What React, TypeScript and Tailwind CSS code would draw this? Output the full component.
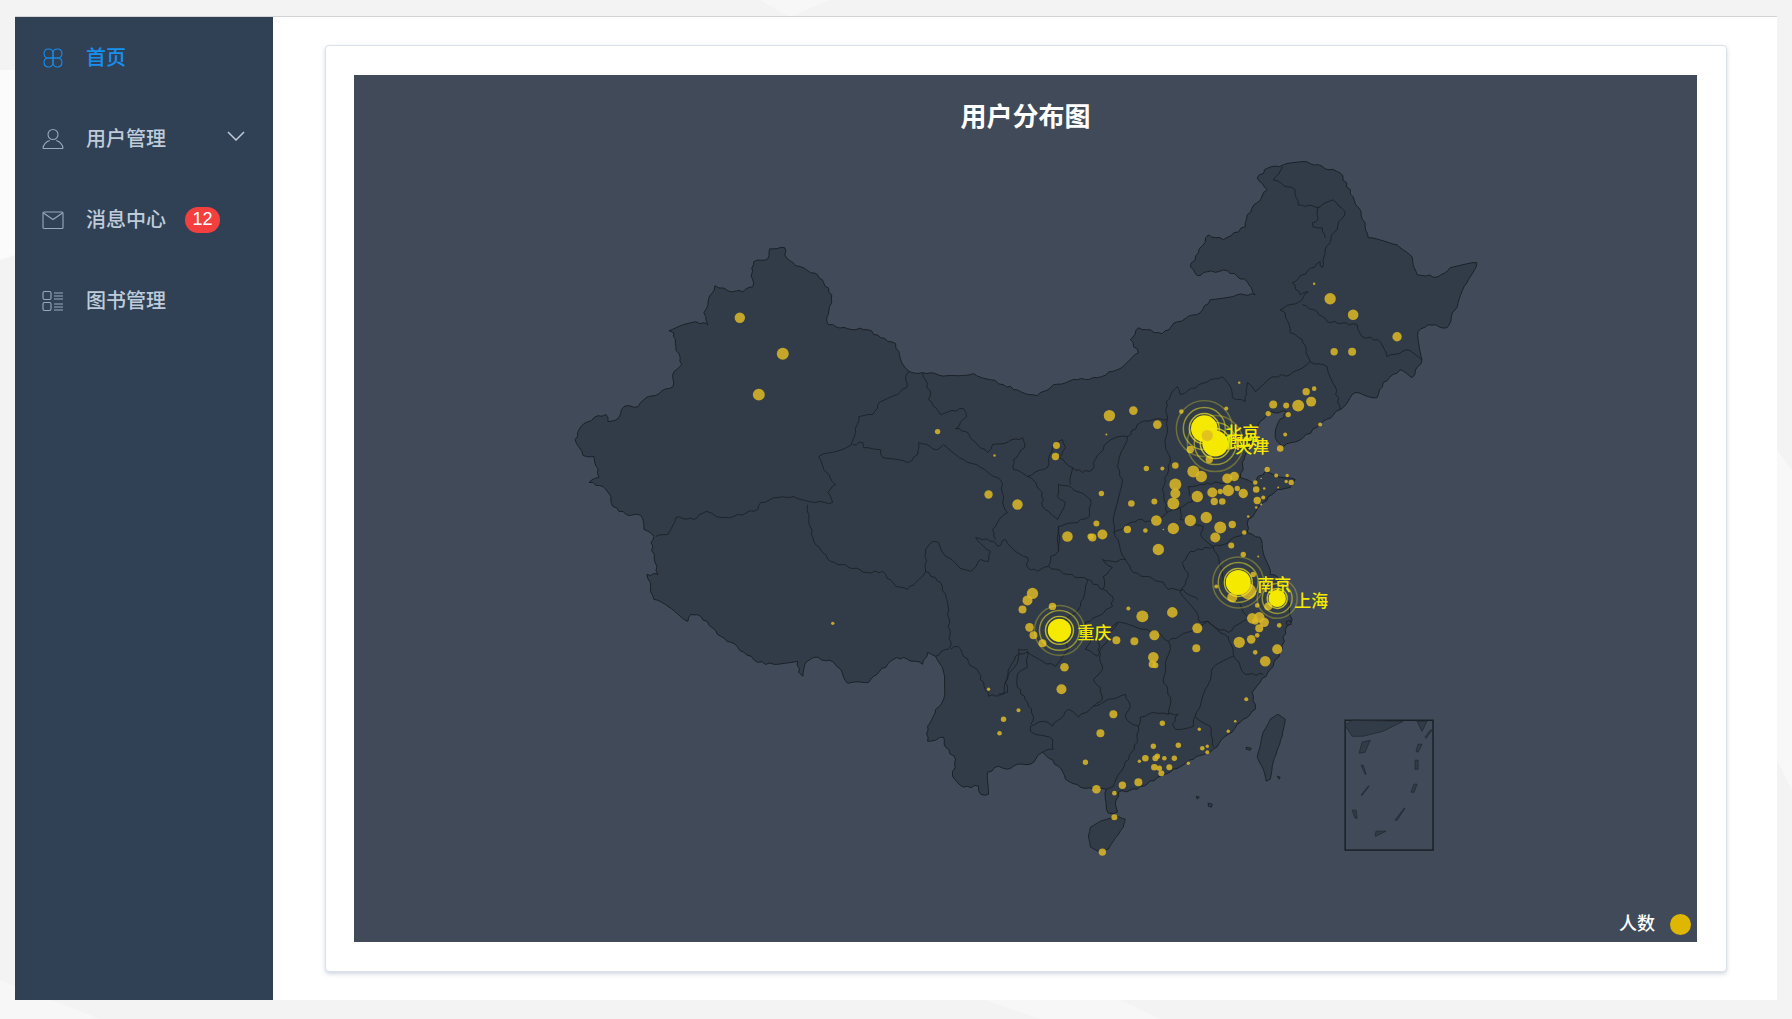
const OUTLINE =
  '784,248 784,255 795,266 807,271 817,275 823,283 831,295 831,303 826,318 828,325 847,329 867,330 880,338 895,344 900,360 909,372 922,373 947,376 973,374 990,380 1003,385 1020,392 1037,396 1053,385 1077,380 1097,378 1117,370 1138,353 1130,340 1138,328 1162,334 1177,322 1200,313 1210,300 1237,295 1255,295 1247,282 1227,271 1207,272 1197,276 1190,267 1198,253 1208,235 1223,240 1245,227 1247,215 1267,190 1257,178 1268,168 1283,165 1307,162 1340,173 1353,197 1365,223 1368,238 1397,245 1412,257 1417,275 1438,277 1450,268 1477,263 1467,283 1458,303 1447,328 1428,325 1418,332 1422,360 1412,378 1400,370 1383,383 1377,398 1355,393 1340,410 1320,425 1303,438 1283,447 1275,438 1278,423 1287,412 1267,413 1257,428 1242,463 1243,470 1240,478 1252,483 1265,472 1273,475 1295,480 1290,488 1277,490 1263,503 1255,513 1248,520 1247,533 1260,538 1270,575 1278,578 1287,600 1292,620 1285,630 1282,650 1270,670 1260,683 1252,693 1255,710 1240,723 1228,735 1213,750 1193,760 1173,770 1160,777 1137,790 1118,793 1115,805 1117,813 1108,814 1105,800 1106,790 1093,790 1080,788 1065,780 1058,767 1042,753 1030,765 1017,765 1007,770 998,767 987,773 988,795 980,795 978,787 963,788 952,777 955,760 945,748 943,738 927,742 927,727 935,710 943,700 943,673 935,657 927,653 922,665 903,658 893,660 873,677 868,683 847,684 840,670 833,663 813,658 805,663 802,677 798,673 797,662 773,665 757,663 743,653 730,643 720,637 700,617 690,615 687,622 667,607 653,600 646,575 657,575 650,543 653,537 643,530 640,516 625,515 612,507 610,497 602,487 588,483 598,478 593,457 582,456 574,440 580,427 593,418 605,415 607,422 618,418 623,407 637,407 643,400 672,387 673,372 681,365 675,347 673,333 668,331 695,322 707,325 703,313 714,286 727,291 742,292 752,287 751,268 753,262 767,259 769,249 784,248'

const BORDERS = [
  // xinjiang
  '909,372 905,377 906,388 893,396 880,402 872,415 858,417 855,433 850,446 818,457 823,470 835,485 827,493 832,503 815,503 793,497 777,498 760,503 757,510 733,517 720,518 705,512 693,520 675,518 667,535 655,537',
  // tibet, qinghai
  '807,505 808,520 813,542 830,562 867,573 882,572 895,587 907,590 915,583 925,572 940,583 947,603 950,647 935,657',
  '925,572 925,550 932,542 938,543 945,557 963,570 970,572 980,560 988,562 990,552 975,538 993,542 997,547 1005,540 1013,550 1027,558 1027,568 1037,572 1048,567 1050,557 1058,552 1058,527 1077,523 1089,517 1090,500 1070,487 1058,485 1057,497 1065,503 1057,520 1042,507 1042,493 1030,478 1013,470 1013,460 1024,448 1022,438 1008,442 992,445 987,453 975,443 965,432 955,429 966,417 963,409 948,412 940,415 938,412 928,400 930,395 922,373',
  '852,445 862,443 863,448 880,450 882,458 907,463 917,455 918,443 937,450 943,445 963,460 980,468 997,478 1002,485 1002,503 1007,513 997,523 992,530 995,540',
  // ningxia, shaanxi, inner mongolia south
  '1027,477 1047,468 1052,447 1062,440 1065,448 1058,458 1072,468 1070,485',
  '1072,468 1082,473 1092,470 1095,460 1107,443 1113,439 1127,437 1140,423 1153,420 1167,420 1166,402 1177,387 1180,395 1210,380 1222,377 1230,387 1232,398 1245,402 1247,383 1255,392 1273,377 1290,375 1310,362 1308,357 1302,340 1290,333 1285,313 1280,310 1302,300 1308,292 1300,295 1292,283 1320,262 1322,268 1325,250 1345,212 1333,200 1320,207 1298,205 1295,190 1273,180 1282,167',
  '1318,207 1318,220 1312,223 1313,227 1322,228 1325,238',
  '1302,305 1317,312 1327,322 1357,325 1362,337 1378,340 1387,357 1407,350 1422,360',
  '1310,362 1327,367 1335,387 1340,410',
  '1127,437 1117,467 1122,480 1113,523 1115,537 1125,560 1133,573 1163,583 1168,590 1183,590 1188,595 1198,600',
  '1113,533 1138,520 1152,523 1167,513 1180,508 1192,502 1188,487 1200,485 1218,483 1230,483 1240,478',
  '1167,420 1165,445 1170,463 1162,490 1167,513',
  // henan, shandong, anhui, jiangsu
  '1180,520 1203,527 1200,535 1213,547 1223,545 1237,537 1247,533',
  '1180,508 1180,520',
  '1213,547 1190,552 1182,563 1188,577 1180,593 1198,617 1200,623 1208,622 1215,628 1228,633 1238,625 1248,620 1262,616',
  '1213,547 1222,570 1225,590 1240,605 1248,620',
  '1228,637 1233,655 1240,667 1245,675 1263,675',
  '1233,657 1213,668 1207,687 1200,707 1195,717 1210,727 1213,748',
  '1195,717 1193,727 1175,730 1172,725 1178,715 1167,715 1153,713 1140,718 1138,727 1132,725 1125,718 1130,707 1125,695',
  '1168,715 1170,698 1163,680 1165,663 1170,650 1168,642 1157,633 1143,630 1117,623 1098,643 1100,663 1102,670 1093,680 1100,688 1102,700 1093,707 1078,718 1068,710 1052,727 1043,722 1030,727 1030,732 1052,740 1053,750 1042,753',
  '1168,642 1187,633 1207,622 1217,630 1228,638',
  '1093,707 1108,700 1125,695',
  '1138,727 1137,743 1120,773 1113,787 1106,790',
  // guizhou, chongqing, sichuan
  '1030,725 1033,717 1027,703 1017,688 1017,675 1027,668 1027,652 1015,657 1010,667 1005,683 1007,693 998,697',
  '950,650 957,647 968,663 978,673 988,697 1003,695 1007,677 1017,663 1018,650 1027,650',
  '1027,652 1042,662 1055,667 1068,650 1062,625 1080,607 1085,590 1087,580',
  '1048,567 1067,575 1087,580 1103,590 1112,597 1112,607 1097,617 1085,623 1090,643 1085,650 1097,657 1117,623',
  '1102,560 1112,568 1103,577 1103,590',
  '1102,560 1112,562 1125,560',
  '1058,527 1058,552',
]

const ISLANDS = [
  '1088,837 1090,828 1100,822 1115,817 1125,820 1123,828 1113,842 1108,850 1097,852 1090,848 1088,837',
  '1270,720 1278,715 1285,720 1282,737 1273,763 1270,780 1266,782 1263,770 1257,758 1263,733 1270,720',
  '1246,748 1251,749 1250,751 1246,750 1246,748',
  '1277,777 1280,778 1279,780 1277,777',
  '1196,797 1199,798 1197,800 1196,797',
  '1208,804 1212,805 1211,808 1208,807 1208,804',
  '1286,622 1290,621 1291,625 1287,626 1286,622',
]

const INSET_SHAPES = [
  '1345,726 1352,721 1403,722 1383,732 1363,737 1352,737',
  '1417,722 1427,722 1422,732',
  '1362,743 1370,741 1365,753 1359,754',
  '1430,731 1432,731 1426,739 1425,738',
  '1418,745 1422,745 1418,753 1416,752',
  '1415,761 1418,761 1418,770 1415,770',
  '1361,766 1363,766 1366,775 1365,775',
  '1414,785 1417,785 1414,793 1411,793',
  '1368,787 1369,787 1362,796 1361,796',
  '1352,811 1356,811 1357,819 1355,819',
  '1404,809 1405,809 1397,821 1395,821',
  '1376,832 1386,832 1376,837 1375,837',
]

// x, y, r
const DOTS: [number, number, number][] = [
  [739, 318, 5.2], [782, 354, 6], [758, 395, 6], [937, 432, 2.7], [994, 456, 1.2], [1056, 446, 3.5], [1055, 457, 3.7], [988, 495, 4.2], [1017, 505, 5.2],
  [1314, 284, 1.2], [1330, 299, 5.7], [1353, 315, 5.3], [1397, 337, 4.7], [1334, 352, 3.7], [1352, 352, 4], [1239, 383, 1.2], [1306, 392, 3.7], [1314, 389, 2.3],
  [1273, 405, 4], [1286, 406, 3], [1298, 406, 6], [1311, 402, 5], [1268, 414, 2.7], [1288, 415, 2.7], [1320, 425, 2], [1285, 435, 2], [1280, 449, 3.3],
  [1226, 409, 2], [1181, 412, 2.3], [1109, 416, 5.7], [1133, 411, 4.3], [1157, 425, 4.3], [1106, 435, 1], [1190, 450, 3.7], [1209, 460, 3.7], [1175, 466, 3.3],
  [1146, 469, 2.7], [1162, 469, 2], [1193, 472, 6], [1201, 477, 5.7], [1227, 479, 5], [1234, 477, 4.7], [1267, 470, 2.7], [1276, 476, 2], [1287, 476, 1.7],
  [1286, 482, 1.7], [1291, 483, 2.7], [1255, 483, 2.3], [1261, 479, 0.8], [1256, 490, 3.3], [1264, 489, 1.3], [1278, 488, 1], [1175, 485, 6], [1175, 494, 5],
  [1212, 493, 5], [1220, 492, 2.7], [1228, 491, 5.7], [1237, 489, 2.7], [1243, 494, 4.7], [1197, 497, 5.7], [1101, 494, 2.7], [1131, 504, 3.3], [1154, 502, 3],
  [1173, 504, 6], [1214, 502, 3.7], [1222, 502, 3.3], [1257, 501, 3.7], [1263, 498, 2], [1261, 505, 1], [1256, 508, 1.3], [1248, 517, 1.3], [1096, 524, 3],
  [1156, 521, 5.3], [1190, 521, 5.7], [1206, 518, 5.7], [1232, 525, 3.7], [1127, 530, 3.7], [1145, 531, 2.3], [1163, 530, 0.8], [1173, 529, 5.7], [1220, 528, 6],
  [1244, 533, 2.3], [1067, 537, 5.3], [1092, 538, 4], [1102, 535, 5], [1090, 537, 3], [1215, 538, 5], [1158, 550, 5.7], [1231, 546, 3], [1243, 555, 2.7], [1258, 557, 1],
  [1216, 587, 2], [1232, 598, 5], [1248, 592, 8], [1253, 575, 2.7], [1257, 606, 2.3], [1268, 607, 4], [1252, 619, 5.3], [1259, 618, 5.3], [1264, 623, 4.7],
  [1255, 622, 3.3], [1259, 629, 4], [1279, 626, 2.3], [1257, 636, 2.3], [1251, 640, 4.3], [1239, 643, 5.7], [1277, 650, 5], [1255, 653, 2.3], [1265, 662, 5.3],
  [1246, 700, 2], [1235, 722, 1.3], [1228, 732, 1.7], [1128, 609, 2], [1142, 617, 6], [1172, 613, 5.3], [1197, 629, 5], [1116, 641, 4], [1134, 642, 4], [1154, 636, 5],
  [1196, 649, 4], [1153, 658, 5.3], [1152, 665, 3.7], [1155, 666, 3], [1113, 715, 4], [1162, 724, 2.7], [1199, 730, 1.7], [1100, 734, 4], [1153, 747, 2.7],
  [1178, 746, 2.7], [1202, 749, 2.3], [1207, 747, 1.7], [1207, 753, 2], [1145, 759, 3.3], [1139, 762, 1.7], [1157, 757, 2.7], [1155, 759, 3], [1164, 759, 2.3],
  [1174, 759, 2.7], [1154, 768, 3.3], [1159, 769, 2.7], [1161, 774, 3], [1169, 768, 3], [1188, 764, 1.7], [1138, 783, 4], [1122, 786, 3.7], [1114, 794, 2.3],
  [1114, 818, 3], [1102, 853, 3.7], [1032, 594, 5.7], [1027, 601, 5], [1022, 610, 4], [1052, 607, 3.7], [1029, 628, 4.3], [1033, 636, 4], [1042, 644, 4],
  [1064, 668, 4.3], [1061, 690, 5], [1085, 763, 2.7], [1096, 790, 4.3], [832, 624, 1.7], [988, 690, 1.7], [1018, 711, 2], [1003, 720, 2.7], [999, 734, 2.3],
]

const CITIES = [
  { x: 1204, y: 429, r: 13.3, rings: [15, 21, 28] },
  { x: 1215, y: 444, r: 13, rings: [15, 21, 28] },
  { x: 1238, y: 583, r: 12.5, rings: [14, 20, 25.5] },
  { x: 1277, y: 599, r: 8.7, rings: [10, 15, 20] },
  { x: 1059, y: 631, r: 11.7, rings: [14, 20, 25] },
]

const LABELS = [
  { text: '北京', x: 1225, y: 439 },
  { text: '廊坊', x: 1226, y: 448 },
  { text: '天津', x: 1235, y: 453 },
  { text: '南京', x: 1257, y: 592 },
  { text: '上海', x: 1294, y: 608 },
  { text: '重庆', x: 1077, y: 640 },
]

// roughens a traced line so it reads like a real border
function rough(points: string, closed = false, amp = 1.1) {
  const pts = points.split(' ').map((p) => p.split(',').map(Number))
  let d = `M${pts[0][0]} ${pts[0][1]}`
  for (let i = 1; i < pts.length; i++) {
    const [x0, y0] = pts[i - 1]
    const [x1, y1] = pts[i]
    const len = Math.hypot(x1 - x0, y1 - y0)
    const steps = Math.max(1, Math.round(len / 4))
    for (let s = 1; s <= steps; s++) {
      const t = s / steps
      const x = x0 + (x1 - x0) * t
      const y = y0 + (y1 - y0) * t
      const n = s === steps ? 0 : Math.sin(x * 12.9 + y * 78.2) * amp
      d += `L${(x - ((y1 - y0) / len) * n).toFixed(1)} ${(y + ((x1 - x0) / len) * n).toFixed(1)}`
    }
  }
  return closed ? d + 'Z' : d
}

function ChinaMap() {
  return (
    <svg viewBox="354 75 1342 868" className="absolute inset-0 h-full w-full">
      <path d={rough(OUTLINE, true)} fill="#323c48" stroke="#1b2027" strokeWidth="1" />
      {BORDERS.map((b, i) => (
        <path key={i} d={rough(b)} fill="none" stroke="#1b2027" strokeWidth="0.9" />
      ))}
      {ISLANDS.map((b, i) => (
        <path key={i} d={rough(b, true, 0.3)} fill="#323c48" stroke="#1b2027" strokeWidth="0.9" />
      ))}

      {/* south china sea inset */}
      <rect x="1345" y="721" width="88" height="130" fill="none" stroke="#1b2027" strokeWidth="1.5" />
      {INSET_SHAPES.map((p, i) => (
        <polygon key={i} points={p} fill="#323c48" stroke="#222831" strokeWidth="0.8" />
      ))}

      {DOTS.map(([x, y, r], i) => (
        <circle key={i} cx={x} cy={y} r={r} fill="#ddb926" fillOpacity="0.85" />
      ))}

      {CITIES.map((c) => (
        <g key={c.x}>
          {c.rings.map((r, i) => (
            <circle key={r} cx={c.x} cy={c.y} r={r} fill="none" stroke="#f4e925" strokeWidth="1.5" strokeOpacity={0.7 - i * 0.2} />
          ))}
          <circle cx={c.x} cy={c.y} r={c.r} fill="#f5e900" />
        </g>
      ))}
      <circle cx="1207" cy="436" r="5.7" fill="#ddb926" fillOpacity="0.8" />

      {LABELS.map((l) => (
        <text key={l.text} x={l.x} y={l.y} fontSize="17" fontWeight="500" fill="#f5e900">
          {l.text}
        </text>
      ))}
    </svg>
  )
}

function FlowerIcon() {
  return (
    <svg viewBox="0 0 22 22" className="h-[22px] w-[22px]" fill="none" stroke="currentColor" strokeWidth="1.1">
      <path d="M11 11H6a4.5 4.5 0 1 1 5-5z" />
      <path d="M11 11h5a4.5 4.5 0 1 0-5-5z" />
      <path d="M11 11H6a4.5 4.5 0 1 0 5 5z" />
      <path d="M11 11h5a4.5 4.5 0 1 1-5 5z" />
    </svg>
  )
}

function UserIcon() {
  return (
    <svg viewBox="0 0 22 22" className="h-[22px] w-[22px]" fill="none" stroke="currentColor" strokeWidth="1.1">
      <circle cx="11" cy="6.5" r="5" />
      <path d="M1 20.5c0-4 3.5-7.2 6.8-8M21 20.5c0-4-3.500-7.200-6.800-8M1 20.500h20" />
    </svg>
  )
}

function MailIcon() {
  return (
    <svg viewBox="0 0 22 20" className="h-[20px] w-[22px]" fill="none" stroke="currentColor" strokeWidth="1.1">
      <rect x="1" y="2" width="20" height="16.500" rx="1" />
      <path d="M1.500 3 11 9.500 20.500 3" />
    </svg>
  )
}

function BookIcon() {
  return (
    <svg viewBox="0 0 22 22" className="h-[22px] w-[22px]" fill="none" stroke="currentColor" strokeWidth="1.1">
      <rect x="1" y="1.500" width="8" height="8" rx="1.500" />
      <rect x="1" y="12.500" width="8" height="8" rx="1.500" />
      <path d="M12 3h9M12 6h9M12 9h9M12 14h9M12 17h9M12 20h9" />
    </svg>
  )
}

function Background() {
  return (
    <svg viewBox="0 0 1792 1019" className="absolute inset-0 h-full w-full">
      <polygon points="0,70 60,70 60,240 0,260" fill="#fbfbfb" />
      <polygon points="760,0 830,0 790,17" fill="#f7f7f8" />
      <polygon points="0,980 100,1019 0,1019" fill="#f7f7f8" />
      <polygon points="985,1000 1120,1000 1160,1019 1040,1019" fill="#f7f7f8" />
      <polygon points="1777,450 1792,470 1792,790 1777,760" fill="#f8f8f9" />
    </svg>
  )
}

function App() {
  const items = [
    { label: '首页', icon: <FlowerIcon />, active: true },
    { label: '用户管理', icon: <UserIcon />, arrow: true },
    { label: '消息中心', icon: <MailIcon />, badge: '12' },
    { label: '图书管理', icon: <BookIcon /> },
  ]

  return (
    <div className="relative flex h-screen w-full overflow-hidden bg-[#f3f3f4] pt-4 pr-[15px] pb-[19px] pl-[15px] font-['Liberation_Sans','Noto_Sans_CJK_SC',sans-serif]">
      <Background />

      <div className="relative flex flex-1 border-t border-[#d4d4d6] bg-white">
        {/* Sidebar */}
        <nav className="w-[258px] shrink-0 bg-[#304156]">
          {items.map((item) => (
            <div key={item.label} className="relative flex h-[81px] items-center pl-[27px] text-[#bfcbd9]">
              <span className={`flex w-[22px] items-center justify-center ${item.active ? 'text-[#1a8ae6]' : 'text-[#98a9bb]'}`}>
                {item.icon}
              </span>
              <span className={`ml-[22px] text-[20px] font-medium ${item.active ? 'text-[#1890f0]' : ''}`}>{item.label}</span>
              {item.badge && (
                <span className="ml-[19px] flex h-[26px] w-[35px] items-center justify-center rounded-full bg-[#f43f3f] text-[18px] text-white">
                  {item.badge}
                </span>
              )}
              {item.arrow && (
                <svg viewBox="0 0 18 10" className="absolute top-[33px] right-[28px] h-[10px] w-[18px]" fill="none" stroke="currentColor" strokeWidth="1.5">
                  <path d="M1 1l8 8 8-8" />
                </svg>
              )}
            </div>
          ))}
        </nav>

        {/* Content */}
        <main className="flex flex-1 pt-[28px] pr-[50px] pb-[28px] pl-[52px]">
          <div className="flex-1 rounded border border-[#dbe1e9] bg-white pt-[29px] pr-[29px] pb-[29px] pl-[28px] shadow-[0_2px_4px_rgba(120,140,165,0.35)]">
            <div className="relative h-full w-full bg-[#404a59]">
              <ChinaMap />
              <h1 className="absolute inset-x-0 top-[23px] text-center text-[26px] leading-[38px] font-bold text-white">
                用户分布图
              </h1>
              <div className="absolute right-[6px] bottom-[4px] flex items-center gap-[15px] text-[18px] font-medium text-white">
                <span>人数</span>
                <span className="h-[21px] w-[21px] rounded-full bg-[#e0b700]" />
              </div>
            </div>
          </div>
        </main>
      </div>
    </div>
  )
}

export default App
